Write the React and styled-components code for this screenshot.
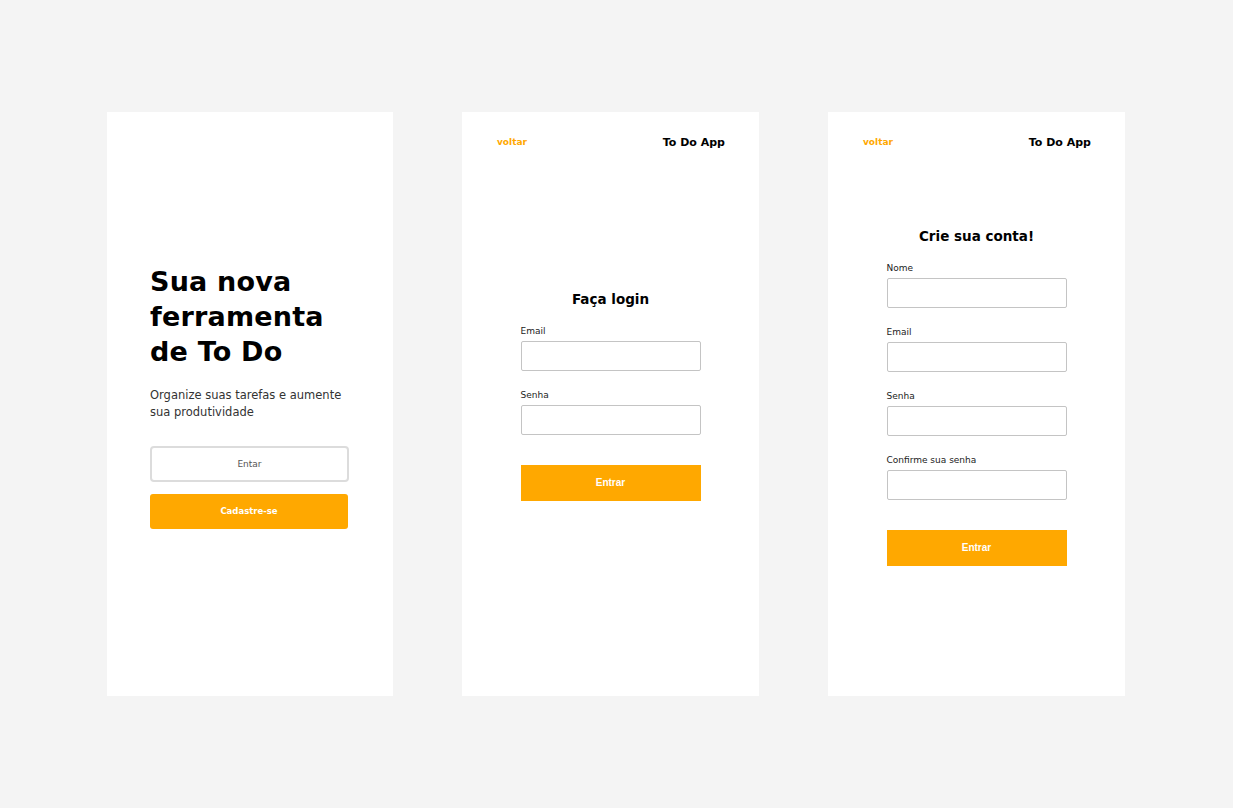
import React from 'react';
import styled, { createGlobalStyle } from 'styled-components';

const GlobalStyle = createGlobalStyle`
	html, body {
		margin: 0;
		padding: 0;
		background: #f4f4f4;
	}
	* {
		box-sizing: border-box;
	}
`;

const Page = styled.main`
	width: 1233px;
	height: 808px;
	display: flex;
	align-items: center;
	padding-left: 107px;
	gap: 69px;
	font-family: 'DejaVu Sans', sans-serif;
`;

const Card = styled.section`
	width: ${(p) => p.$width}px;
	height: 584px;
	flex-shrink: 0;
	background: #fff;
	display: flex;
	flex-direction: column;
`;

const Welcome = styled.div`
	flex: 1;
	display: flex;
	flex-direction: column;
	justify-content: center;
	padding: 0 43px 16px 43px;
`;

const Headline = styled.h1`
	font-size: 27px;
	line-height: 35px;
	font-weight: 700;
	color: #000;
	margin: 0;
	letter-spacing: 0.2px;
`;

const Subtitle = styled.p`
	font-size: 11.5px;
	line-height: 17px;
	color: #333;
	margin: 18px 0 25px;
`;

const OutlineButton = styled.button`
	width: 199px;
	height: 36px;
	border: 2px solid #dcdcdc;
	border-radius: 4px;
	background: #fff;
	color: #555;
	font-family: 'DejaVu Sans', sans-serif;
	font-size: 9px;
	cursor: pointer;
`;

const PrimaryButton = styled.button`
	width: ${(p) => p.$width || 180}px;
	height: ${(p) => p.$height || 36}px;
	margin-top: ${(p) => p.$top || 0}px;
	border: none;
	border-radius: ${(p) => p.$radius || 0}px;
	background: #ffa800;
	color: #fff;
	font-family: ${(p) => (p.$alt ? "'DejaVu Sans', sans-serif" : "'Liberation Sans', Arial, sans-serif")};
	font-size: ${(p) => (p.$alt ? 8.5 : 10)}px;
	font-weight: 700;
	cursor: pointer;
`;

const Header = styled.header`
	display: flex;
	justify-content: space-between;
	align-items: center;
	padding: 20px 34px 0 35px;
	height: 40px;
`;

const BackLink = styled.a`
	color: #ffa800;
	font-size: 9px;
	font-weight: 700;
	text-decoration: none;
	cursor: pointer;
`;

const AppName = styled.span`
	color: #000;
	font-size: 11px;
	font-weight: 700;
`;

const Body = styled.div`
	flex: 1;
	display: flex;
	flex-direction: column;
	align-items: center;
	justify-content: center;
	padding-bottom: ${(p) => p.$bottom}px;
`;

const FormTitle = styled.h2`
	font-size: 13.5px;
	line-height: 18px;
	font-weight: 700;
	color: #000;
	margin: 0 0 17px;
`;

const Form = styled.form`
	width: 180px;
	display: flex;
	flex-direction: column;
	gap: 18px;
`;

const Field = styled.label`
	display: flex;
	flex-direction: column;
	gap: 4px;
`;

const FieldLabel = styled.span`
	font-size: 9px;
	line-height: 12px;
	color: #222;
`;

const Input = styled.input`
	width: 180px;
	height: 30px;
	border: 1px solid #c4c4c4;
	border-radius: 2px;
	padding: 0 8px;
	outline: none;
`;

const LoginForm = ({ title, fields, bottom }) => (
	<Body $bottom={bottom}>
		<FormTitle>{title}</FormTitle>
		<Form onSubmit={(e) => e.preventDefault()}>
			{fields.map((f) => (
				<Field key={f}>
					<FieldLabel>{f}</FieldLabel>
					<Input type={f.toLowerCase().includes('senha') ? 'password' : 'text'} />
				</Field>
			))}
			<PrimaryButton type="submit" $top={12}>
				Entrar
			</PrimaryButton>
		</Form>
	</Body>
);

const App = () => {
	return (
		<>
			<GlobalStyle />
			<Page>
				<Card $width={286}>
					<Welcome>
						<Headline>
							Sua nova
							<br />
							ferramenta
							<br />
							de To Do
						</Headline>
						<Subtitle>
							Organize suas tarefas e aumente
							<br />
							sua produtividade
						</Subtitle>
						<OutlineButton>Entar</OutlineButton>
						<PrimaryButton $width={198} $height={35} $radius={3} $top={12} $alt>
							Cadastre-se
						</PrimaryButton>
					</Welcome>
				</Card>
				<Card $width={297}>
					<Header>
						<BackLink>voltar</BackLink>
						<AppName>To Do App</AppName>
					</Header>
					<LoginForm title="Faça login" fields={['Email', 'Senha']} bottom={58} />
				</Card>
				<Card $width={297}>
					<Header>
						<BackLink>voltar</BackLink>
						<AppName>To Do App</AppName>
					</Header>
					<LoginForm title="Crie sua conta!" fields={['Nome', 'Email', 'Senha', 'Confirme sua senha']} bottom={56} />
				</Card>
			</Page>
		</>
	);
};

export default App;
